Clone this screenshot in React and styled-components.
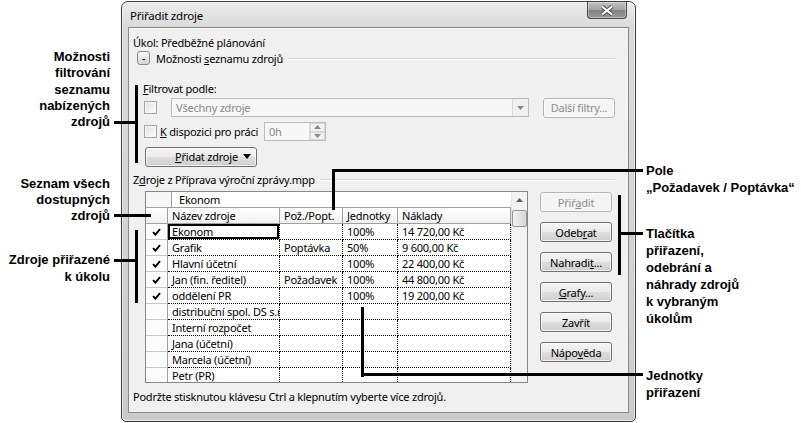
import React from 'react'
import styled, { createGlobalStyle } from 'styled-components'

const GlobalStyle = createGlobalStyle`
  html, body { margin: 0; padding: 0; background: #fff; }
  body { width: 801px; height: 423px; overflow: hidden; }
  * { box-sizing: border-box; }
`

const rows = [
  { on: true, name: 'Ekonom', req: '', units: '100%', cost: '14 720,00 Kč', selected: true },
  { on: true, name: 'Grafik', req: 'Poptávka', units: '50%', cost: '9 600,00 Kč' },
  { on: true, name: 'Hlavní účetní', req: '', units: '100%', cost: '22 400,00 Kč' },
  { on: true, name: 'Jan (fin. ředitel)', req: 'Požadavek', units: '100%', cost: '44 800,00 Kč' },
  { on: true, name: 'oddělení PR', req: '', units: '100%', cost: '19 200,00 Kč' },
  { name: 'distribuční spol. DS s.r' },
  { name: 'Interní rozpočet' },
  { name: 'Jana (účetní)' },
  { name: 'Marcela (účetní)' },
  { name: 'Petr (PR)' },
]

const Page = styled.div`
  position: relative;
  width: 801px;
  height: 423px;
  padding: 1px 0 0 121px;
  background: #fff;
`

const Window = styled.div`
  width: 515px;
  height: 421px;
  border: 1px solid #3c3c3c;
  border-radius: 7px 7px 5px 5px;
  background: linear-gradient(180deg, #ececec 0%, #dadada 6%, #d2d2d2 60%, #cbcbcb 100%);
  box-shadow: inset 0 0 0 1px rgba(255, 255, 255, 0.55);
  display: flex;
  flex-direction: column;
  padding: 0 6px 8px 6px;
  font-family: "Noto Sans", "Open Sans", sans-serif;
  font-size: 11px;
  letter-spacing: -0.22px;
  color: #000;
`

const TitleBar = styled.div`
  height: 25px;
  margin: 0 -6px;
  padding: 0 8px 0 8px;
  display: flex;
  align-items: center;
  font-size: 11.5px;
`

const Title = styled.span`
  padding-top: 1px;
`

const CloseBtn = styled.div`
  margin-left: auto;
  align-self: flex-start;
  width: 40px;
  height: 17px;
  border: 1px solid #4a4a4a;
  border-top: none;
  border-radius: 0 0 4px 4px;
  background: linear-gradient(180deg, #c4c4c4 0%, #a2a2a2 48%, #838383 52%, #9a9a9a 100%);
  box-shadow: inset 0 0 0 1px rgba(255, 255, 255, 0.35);
  display: flex;
  align-items: center;
  justify-content: center;
`

const Client = styled.div`
  flex: 1;
  background: #f0f0f0;
  border: 1px solid #8a8a8a;
  display: flex;
  flex-direction: column;
  padding: 6px 13px 0 4px;
`

const Line = styled.div`
  height: 16px;
  display: flex;
  align-items: center;
  white-space: nowrap;
  margin-top: ${p => p.$mt || 0}px;
  padding-left: ${p => p.$pl || 0}px;
`

const Sep = styled.div`
  flex: 1;
  height: 1px;
  margin-left: 5px;
  background: #d5d5d5;
  box-shadow: 0 1px 0 #fff;
`

const Toggle = styled.div`
  width: 13px;
  height: 14px;
  margin: 0 6px 0 4px;
  border: 1px solid #8a8a8a;
  border-radius: 3px;
  background: linear-gradient(180deg, #fafafa 0%, #e6e6e6 50%, #d8d8d8 100%);
  display: flex;
  align-items: flex-end;
  justify-content: center;
  font-size: 9px;
  line-height: 10px;
  font-weight: bold;
`

const Row = styled.div`
  height: 19px;
  display: flex;
  align-items: center;
  margin-top: ${p => p.$mt || 0}px;
  padding-left: ${p => p.$pl || 0}px;
`

const Check = styled.div`
  width: 13px;
  height: 13px;
  margin-left: 1px;
  border: 1px solid #a8a8a8;
  background: linear-gradient(135deg, #e4e4e4, #fafafa);
  box-shadow: inset 0 0 0 1px #f4f4f4;
`

const Label = styled.span`
  width: 94px;
  margin-left: 3px;
  white-space: nowrap;
`

const Combo = styled.div`
  width: 358px;
  height: 19px;
  margin-left: 14px;
  border: 1px solid #bdbdbd;
  background: #f7f7f7;
  display: flex;
  align-items: center;
  color: #8a8a8a;
  padding-left: 4px;
`

const ComboArrow = styled.div`
  margin-left: auto;
  width: 16px;
  height: 17px;
  border-left: 1px solid #d6d6d6;
  background: #f0f0f0;
  display: flex;
  align-items: center;
  justify-content: center;
`

const Spin = styled.div`
  width: 62px;
  height: 19px;
  margin-left: 10px;
  border: 1px solid #bdbdbd;
  background: #f7f7f7;
  display: flex;
  color: #8a8a8a;
  padding-left: 4px;
  align-items: center;
`

const SpinBtns = styled.div`
  margin-left: auto;
  width: 16px;
  height: 17px;
  display: flex;
  flex-direction: column;
  border-left: 1px solid #d6d6d6;
`

const SpinBtn = styled.div`
  flex: 1;
  border: 1px solid #d8d8d8;
  background: #f2f2f2;
  display: flex;
  align-items: center;
  justify-content: center;
`

const Button = styled.div`
  width: ${p => p.$w || 72}px;
  height: 20px;
  margin-left: ${p => p.$ml || 0}px;
  border: 1px solid ${p => (p.$disabled ? '#b5b5b5' : '#707070')};
  border-radius: 3px;
  background: ${p =>
    p.$disabled
      ? '#f4f4f4'
      : 'linear-gradient(180deg, #f4f4f4 0%, #ebebeb 48%, #dddddd 52%, #cfcfcf 100%)'};
  box-shadow: inset 0 0 0 1px ${p => (p.$disabled ? '#fbfbfb' : 'rgba(255,255,255,0.7)')};
  color: ${p => (p.$disabled ? '#8d8d8d' : '#000')};
  display: flex;
  align-items: center;
  justify-content: ${p => (p.$split ? 'space-between' : 'center')};
  padding: ${p => (p.$split ? '0 5px 0 29px' : '0')};
  white-space: nowrap;
  flex-shrink: 0;
`

const Main = styled.div`
  display: flex;
  margin-top: 4px;
  padding-left: 12px;
`

const Grid = styled.div`
  width: 383px;
  height: 192px;
  border: 1px solid #828790;
  background: #fff;
  display: flex;
  overflow: hidden;
`

const Table = styled.div`
  flex: 1;
  display: flex;
  flex-direction: column;
  overflow: hidden;
`

const EditRow = styled.div`
  height: 16px;
  flex-shrink: 0;
  display: flex;
  border-bottom: 1px solid #a0a0a0;
`

const EditLead = styled.div`
  width: 26px;
  border-right: 1px solid #a0a0a0;
  background: #f7f7f7;
`

const EditText = styled.div`
  padding-left: 7px;
  line-height: 15px;
`

const GridRow = styled.div`
  display: grid;
  grid-template-columns: 22px 112px 63px 55px 113px;
  height: 16px;
  flex-shrink: 0;
`

const Head = styled.div`
  border-right: 1px solid #a0a0a0;
  border-bottom: 1px solid #a0a0a0;
  background: linear-gradient(180deg, #ffffff 0%, #f1f1f1 100%);
  padding-left: 4px;
  line-height: 15px;
  white-space: nowrap;
  overflow: hidden;
`

const Ind = styled.div`
  border-right: 1px solid #a0a0a0;
  border-bottom: 1px solid #c8c8c8;
  background: #fbfbfb;
  display: flex;
  align-items: center;
  justify-content: center;
`

const Cell = styled.div`
  border-right: 1px dotted #000;
  border-bottom: 1px dotted #000;
  padding-left: 4px;
  line-height: 15px;
  white-space: nowrap;
  overflow: hidden;
  box-shadow: ${p => (p.$selected ? 'inset 0 0 0 2px #000' : 'none')};
`

const Scroll = styled.div`
  width: 16px;
  background: #f3f3f3;
  border-left: 1px solid #e6e6e6;
  display: flex;
  flex-direction: column;
  align-items: center;
`

const ScrollArrow = styled.div`
  height: 16px;
  display: flex;
  align-items: center;
  justify-content: center;
`

const Thumb = styled.div`
  width: 15px;
  height: 17px;
  margin-top: 2px;
  border: 1px solid #979797;
  border-radius: 2px;
  background: linear-gradient(90deg, #f2f2f2 0%, #e4e4e4 50%, #d6d6d6 100%);
`

const Buttons = styled.div`
  display: flex;
  flex-direction: column;
  gap: 10px;
  margin-left: 12px;
  padding-top: 1px;
`

const Callout = styled.div`
  position: absolute;
  left: ${p => p.$x}px;
  top: ${p => p.$y}px;
  width: ${p => p.$w}px;
  text-align: ${p => p.$align || 'left'};
  font-family: "Liberation Sans", Arial, sans-serif;
  font-weight: bold;
  font-size: 13px;
  line-height: ${p => p.$lh || 17}px;
  color: #000;
  white-space: nowrap;
`

const Bar = styled.div`
  position: absolute;
  left: ${p => p.$x}px;
  top: ${p => p.$y}px;
  width: ${p => p.$w}px;
  height: ${p => p.$h}px;
  background: #000;
`

const Tick = () => (
  <svg width="9" height="8" viewBox="0 0 9 8">
    <path d="M1 4.2 L3.4 6.6 L8 1.2" fill="none" stroke="#000" strokeWidth="1.9" />
  </svg>
)

const Tri = ({ up, color = '#8a8a8a' }) => (
  <svg width="7" height="4" viewBox="0 0 7 4">
    <path d={up ? 'M0 4 L3.5 0 L7 4 Z' : 'M0 0 L7 0 L3.5 4 Z'} fill={color} />
  </svg>
)

export default function App() {
  return (
    <Page>
      <GlobalStyle />
      <Window>
        <TitleBar>
          <Title>Přiřadit zdroje</Title>
          <CloseBtn>
            <svg width="14" height="11" viewBox="0 0 14 11">
              <path d="M2 1.5 L12 9.5 M12 1.5 L2 9.5" stroke="#4a4a4a" strokeWidth="4" />
              <path d="M2 1.5 L12 9.5 M12 1.5 L2 9.5" stroke="#fff" strokeWidth="2.2" />
            </svg>
          </CloseBtn>
        </TitleBar>
        <Client>
          <Line>Úkol: Předběžné plánování</Line>
          <Line>
            <Toggle>-</Toggle>
            <span>Možnosti <u>s</u>eznamu zdrojů</span>
            <Sep />
          </Line>
          <Line $mt={14} $pl={10}><span><u>F</u>iltrovat podle:</span></Line>
          <Row $mt={2} $pl={10}>
            <Check />
            <Combo>
              Všechny zdroje
              <ComboArrow><Tri /></ComboArrow>
            </Combo>
            <Button $disabled $ml={14}>Další filtry...</Button>
          </Row>
          <Row $mt={5} $pl={10}>
            <Check />
            <Label><u>K</u> dispozici pro práci</Label>
            <Spin>
              0h
              <SpinBtns>
                <SpinBtn><Tri up /></SpinBtn>
                <SpinBtn><Tri /></SpinBtn>
              </SpinBtns>
            </Spin>
          </Row>
          <Row $mt={6} $pl={12}>
            <Button $w={112} $split>
              <span><u>P</u>řidat zdroje</span>
              <svg width="8" height="5" viewBox="0 0 8 5"><path d="M0 0 L8 0 L4 5 Z" fill="#000" /></svg>
            </Button>
          </Row>
          <Line $mt={5}>
            <span>Z<u>d</u>roje z Příprava výroční zprávy.mpp</span>
            <Sep />
          </Line>
          <Main>
            <Grid>
              <Table>
                <EditRow>
                  <EditLead />
                  <EditText>Ekonom</EditText>
                </EditRow>
                <GridRow>
                  <Head />
                  <Head>Název zdroje</Head>
                  <Head>Pož./Popt.</Head>
                  <Head>Jednotky</Head>
                  <Head>Náklady</Head>
                </GridRow>
                {rows.map(r => (
                  <GridRow key={r.name}>
                    <Ind>{r.on && <Tick />}</Ind>
                    <Cell $selected={r.selected}>{r.name}</Cell>
                    <Cell>{r.req}</Cell>
                    <Cell>{r.units}</Cell>
                    <Cell>{r.cost}</Cell>
                  </GridRow>
                ))}
              </Table>
              <Scroll>
                <ScrollArrow><Tri up color="#606060" /></ScrollArrow>
                <Thumb />
              </Scroll>
            </Grid>
            <Buttons>
              <Button $disabled><span>Přiř<u>a</u>dit</span></Button>
              <Button><span>Odeb<u>r</u>at</span></Button>
              <Button><span>Nahradi<u>t</u>...</span></Button>
              <Button><span><u>G</u>rafy...</span></Button>
              <Button>Zavřít</Button>
              <Button><span>Nápo<u>v</u>ěda</span></Button>
            </Buttons>
          </Main>
          <Line $mt={5}>Podržte stisknutou klávesu Ctrl a klepnutím vyberte více zdrojů.</Line>
        </Client>
      </Window>

      <Callout $x={0} $y={49} $w={110} $align="right" $lh={16.3}>
        Možnosti<br />filtrování<br />seznamu<br />nabízených<br />zdrojů
      </Callout>
      <Bar $x={114} $y={121} $w={23} $h={3} />
      <Bar $x={135} $y={85} $w={3} $h={78} />

      <Callout $x={0} $y={176} $w={110} $align="right" $lh={15.8}>
        Seznam všech<br />dostupných<br />zdrojů
      </Callout>
      <Bar $x={114} $y={214} $w={37} $h={3} />

      <Callout $x={0} $y={251} $w={110} $align="right" $lh={17}>
        Zdroje přiřazené<br />k úkolu
      </Callout>
      <Bar $x={114} $y={259} $w={23} $h={3} />
      <Bar $x={135} $y={230} $w={3} $h={73} />

      <Callout $x={646} $y={162} $w={155} $lh={17}>
        Pole<br />„Požadavek / Poptávka“
      </Callout>
      <Bar $x={332} $y={169} $w={311} $h={3} />
      <Bar $x={332} $y={169} $w={3} $h={41} />

      <Callout $x={646} $y={225} $w={155} $lh={17}>
        Tlačítka<br />přiřazení,<br />odebrání a<br />náhrady zdrojů<br />k vybraným<br />úkolům
      </Callout>
      <Bar $x={618} $y={195} $w={3} $h={80} />
      <Bar $x={618} $y={232} $w={25} $h={3} />

      <Callout $x={646} $y={367} $w={155} $lh={17}>
        Jednotky<br />přiřazení
      </Callout>
      <Bar $x={361} $y={307} $w={3} $h={70} />
      <Bar $x={361} $y={373} $w={282} $h={3} />
    </Page>
  )
}
